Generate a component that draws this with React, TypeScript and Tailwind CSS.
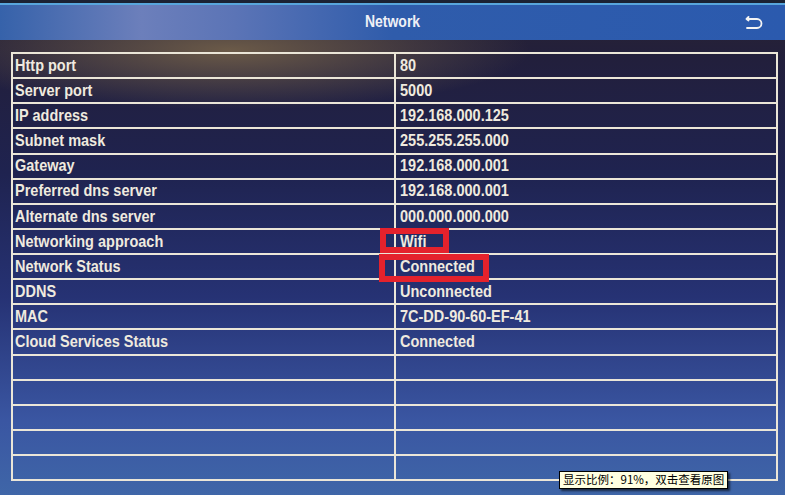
import { FC } from "react";

type Row = { label: string; value: string };

const rows: Row[] = [
  { label: "Http port", value: "80" },
  { label: "Server port", value: "5000" },
  { label: "IP address", value: "192.168.000.125" },
  { label: "Subnet mask", value: "255.255.255.000" },
  { label: "Gateway", value: "192.168.000.001" },
  { label: "Preferred dns server", value: "192.168.000.001" },
  { label: "Alternate dns server", value: "000.000.000.000" },
  { label: "Networking approach", value: "Wifi" },
  { label: "Network Status", value: "Connected" },
  { label: "DDNS", value: "Unconnected" },
  { label: "MAC", value: "7C-DD-90-60-EF-41" },
  { label: "Cloud Services Status", value: "Connected" },
  { label: "", value: "" },
  { label: "", value: "" },
  { label: "", value: "" },
  { label: "", value: "" },
  { label: "", value: "" },
];

const BackIcon: FC = () => (
  <svg width="20" height="14" viewBox="0 0 20 14" fill="none">
    <path
      d="M4.5 1 L2.5 3 L4.5 4.5 M2.5 3 H13 A4.5 4.5 0 0 1 13 12 H3"
      stroke="#f4f4f4"
      strokeWidth="1.8"
      strokeLinecap="round"
      strokeLinejoin="round"
    />
  </svg>
);

const CellText: FC<{ text: string }> = ({ text }) => (
  <span className="inline-block origin-center scale-y-[1.15] text-[14.5px] leading-none font-bold text-[#efeadf]">
    {text}
  </span>
);

const App: FC = () => {
  return (
    <div
      className="relative w-[785px] h-[495px] overflow-hidden bg-[radial-gradient(ellipse_300px_60px_at_230px_50px,#6b5a48_0%,rgba(107,90,72,0)_100%),linear-gradient(180deg,#2a2431_0%,#221f3c_12%,#1f2350_35%,#263274_60%,#3a56a2_85%,#3f66a8_100%)]"
      style={{ fontFamily: '"Liberation Sans", Arial, sans-serif' }}
    >
      {/* top edge */}
      <div className="h-[3px] bg-[#1b2233]" />
      <div className="h-[2px] bg-[#58a6dc]" />

      {/* title bar */}
      <div className="relative flex h-[35px] items-center justify-center bg-[linear-gradient(90deg,#3662aa_0%,#6c7fbb_18%,#5b74b6_30%,#2f5cab_50%,#2b5aae_100%)]">
        <span className="mt-[-2px] inline-block scale-y-[1.15] text-[14px] font-bold text-[#eef0f6]">
          Network
        </span>
        <div className="absolute right-[21px] top-[11px]">
          <BackIcon />
        </div>
      </div>

      {/* table */}
      <div className="pl-[11px] pt-[12px]">
        <div className="flex h-[429px] w-[767px] flex-col border-2 border-[#ebe6d8]">
          {rows.map((row, i) => (
            <div
              key={i}
              className={
                i < rows.length - 1
                  ? "grid flex-1 grid-cols-[383px_1fr] border-b-2 border-[#ebe6d8]"
                  : "grid flex-1 grid-cols-[383px_1fr]"
              }
            >
              <div className="flex items-center border-r-2 border-[#ebe6d8] pl-[2px] pb-[1px]">
                <CellText text={row.label} />
              </div>
              <div className="flex items-center pl-[4px] pb-[1px]">
                <CellText text={row.value} />
              </div>
            </div>
          ))}
        </div>
      </div>

      {/* red annotation boxes */}
      <div className="absolute left-[380px] top-[228px] h-[25px] w-[69px] border-[6px] border-[#e4222c]" />
      <div className="absolute left-[379px] top-[254px] h-[28px] w-[110px] border-[6px] border-[#e4222c]" />

      {/* viewer tooltip */}
      <div
        className="absolute left-[559px] top-[471px] flex h-[18px] items-center border border-black bg-[#ffffe1] px-[3px] text-[11.5px] leading-none text-black shadow-[2px_2px_2px_rgba(0,0,0,0.6)]"
        style={{ fontFamily: '"Noto Sans CJK SC", "Liberation Sans", sans-serif' }}
      >
        显示比例：91%，双击查看原图
      </div>
    </div>
  );
};

export default App;
